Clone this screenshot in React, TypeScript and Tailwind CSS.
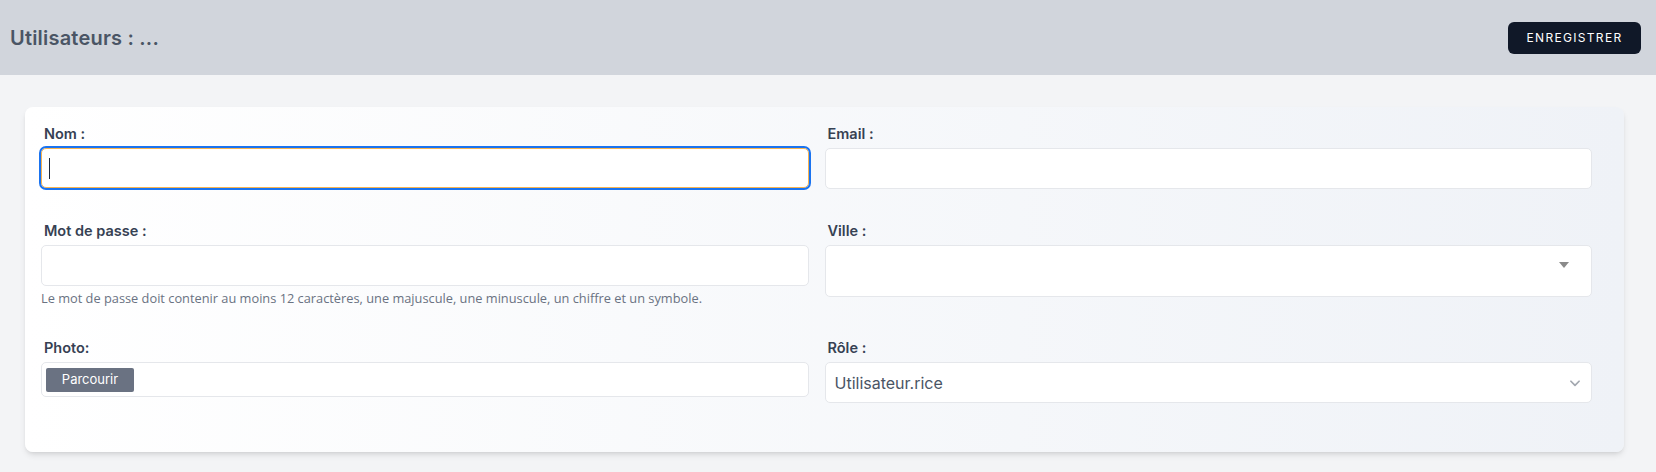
import React from "react";

const sans = { fontFamily: "Inter, 'Noto Sans', sans-serif" };

function Label({ children }: { children: React.ReactNode }) {
  return (
    <label className="block pl-[3px] mb-1 text-[14.5px] leading-5 font-semibold text-gray-700">
      {children}
    </label>
  );
}

export default function App() {
  return (
    <div className="min-h-[472px] bg-gray-100" style={sans}>
      <header className="h-[75px] bg-gray-300 flex items-center justify-between pl-[10px] pr-[15px]">
        <h1 className="text-[20px] font-semibold text-gray-600 tracking-[0.01em]">Utilisateurs : ...</h1>
        <button className="h-[32px] w-[133px] rounded-md bg-gray-900 text-white text-[12px] font-normal tracking-[0.11em]">
          ENREGISTRER
        </button>
      </header>
      <main className="pt-8 pl-[25px] pr-[32px]">
        <div className="rounded-lg shadow-md bg-linear-to-r from-white to-[#eff2f7] pl-4 pr-8 pt-[17px] pb-[49px]">
          <div className="grid grid-cols-2 gap-x-4 gap-y-8">
            <div>
              <Label>Nom :</Label>
              <div className="h-10 rounded-[5px] bg-white border border-[#f6b350] outline-2 outline-[#1a73f0] flex items-center pl-[7px]">
                <span className="block w-px h-[21px] bg-gray-800" />
              </div>
            </div>
            <div>
              <Label>Email :</Label>
              <div className="h-[41px] rounded-[5px] bg-white border border-gray-200" />
            </div>
            <div>
              <Label>Mot de passe :</Label>
              <div className="h-[41px] rounded-[5px] bg-white border border-gray-200" />
              <p
                className="mt-1 text-[12.8px] leading-4 text-gray-500"
                style={{ fontFamily: "'Open Sans', sans-serif" }}
              >
                Le mot de passe doit contenir au moins 12 caractères, une majuscule, une minuscule, un chiffre et un symbole.
              </p>
            </div>
            <div>
              <Label>Ville :</Label>
              <div className="relative h-[52px] rounded-[5px] bg-white border border-gray-200">
                <svg className="absolute right-[22px] top-[16px]" width="10" height="6" viewBox="0 0 10 6">
                  <path d="M0 0 L10 0 L5 6 Z" fill="#8a8a8a" />
                </svg>
              </div>
            </div>
            <div>
              <Label>Photo:</Label>
              <div className="h-[35px] rounded-[5px] bg-white border border-gray-200 flex items-center pl-[4px]">
                <span className="h-6 w-[88px] rounded-[2px] bg-gray-500 text-white text-[13px] flex items-center justify-center">
                  Parcourir
                </span>
              </div>
            </div>
            <div>
              <Label>Rôle :</Label>
              <div className="h-[41px] rounded-[5px] bg-white border border-gray-200 flex items-center justify-between pl-[9px] pr-[9px]">
                <span className="text-base text-gray-600">Utilisateur.rice</span>
                <svg width="14" height="14" viewBox="0 0 24 24" fill="none" stroke="#a3a8b0" strokeWidth="3" strokeLinecap="round" strokeLinejoin="round">
                  <path d="M5 9l7 7 7-7" />
                </svg>
              </div>
            </div>
          </div>
        </div>
      </main>
    </div>
  );
}
